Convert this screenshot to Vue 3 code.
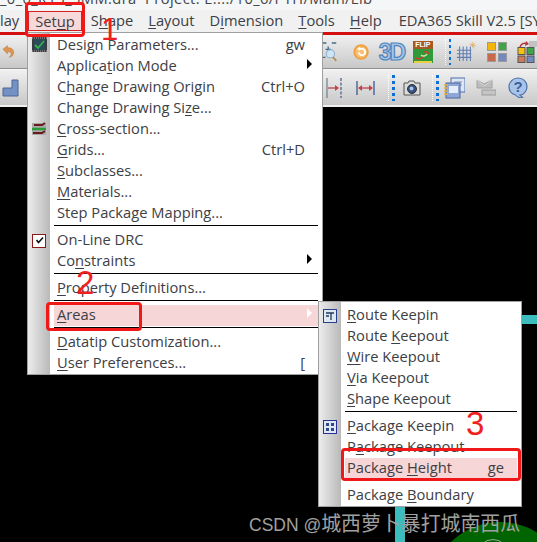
<script setup>
const mainMenu = [
  { pre: 'Desi', u: 'g', post: 'n Parameters...', key: 'gw', icon: 'design' },
  { pre: 'Applica', u: 't', post: 'ion Mode', arrow: true },
  { pre: 'C', u: 'h', post: 'ange Drawing Origin', key: 'Ctrl+O' },
  { pre: 'Change Drawing Si', u: 'z', post: 'e...' },
  { pre: '', u: 'C', post: 'ross-section...', icon: 'cross' },
  { pre: '', u: 'G', post: 'rids...', key: 'Ctrl+D' },
  { pre: '', u: 'S', post: 'ubclasses...' },
  { pre: '', u: 'M', post: 'aterials...' },
  { pre: 'Step Package Mapping...', u: '', post: '' },
  { sep: true },
  { pre: 'On-Line DRC', u: '', post: '', icon: 'check' },
  { pre: 'Co', u: 'n', post: 'straints', arrow: true },
  { sep: true },
  { pre: '', u: 'P', post: 'roperty Definitions...' },
  { sep: true },
  { pre: '', u: 'A', post: 'reas', arrow: true, active: true },
  { sep: true },
  { pre: '', u: 'D', post: 'atatip Customization...' },
  { pre: '', u: 'U', post: 'ser Preferences...', key: '[' }
]

const areasMenu = [
  { pre: '', u: 'R', post: 'oute Keepin', icon: 'route' },
  { pre: 'Route ', u: 'K', post: 'eepout' },
  { pre: '', u: 'W', post: 'ire Keepout' },
  { pre: '', u: 'V', post: 'ia Keepout' },
  { pre: '', u: 'S', post: 'hape Keepout' },
  { sep: true },
  { pre: '', u: 'P', post: 'ackage Keepin', icon: 'package' },
  { pre: 'P', u: 'a', post: 'ckage Keepout' },
  { pre: 'Package ', u: 'H', post: 'eight', key: 'ge', active: true },
  { sep: true },
  { pre: 'Package ', u: 'B', post: 'oundary' }
]

const menus = [
  { name: 'main', items: mainMenu },
  { name: 'areas', items: areasMenu }
]
</script>

<template>
  <div class="screen">
    <div class="titlebar"><span class="title-text">_0_0_R15_5MM.dra&nbsp; Project: E:.../10_6/PTH/Main/Lib</span></div>

    <div class="menubar">
      <span class="top">lay</span>
      <span class="top setup">Set<u>u</u>p</span>
      <span class="top">S<u>h</u>ape</span>
      <span class="top"><u>L</u>ayout</span>
      <span class="top">D<u>i</u>mension</span>
      <span class="top"><u>T</u>ools</span>
      <span class="top"><u>H</u>elp</span>
      <span class="top eda">EDA365 Skill V2.5 [SY</span>
    </div>
    <div class="redline"></div>

    <div class="toolbar row1">
      <svg class="t-undo" width="15" height="15" viewBox="0 0 15 15">
        <path d="M1 5 6 1v2.500c4-.5 7 1.500 7 5 0 3-2 5-5 5.500 2-1.500 2.500-3 2-4.500-.5-1.500-2.500-2-4-1.500V10z" fill="#df9550" stroke="#b97a3a" stroke-width=".6" />
      </svg>
      <svg class="t-zoom" width="18" height="22" viewBox="0 0 18 22">
        <path d="M1 6V1h5M12 1h5M1 12v5h4" fill="none" stroke="#3f6f8e" stroke-width="1.500" />
        <path d="M5 8h6M8 5v6" stroke="#3f6f8e" stroke-width="1.500" />
        <path d="m12 15 5 6" stroke="#b98a52" stroke-width="2" />
        <circle cx="10.500" cy="13" r="4.500" fill="#cfe4f4" stroke="#7fa6c6" />
      </svg>
      <svg class="t-ring" width="18" height="18" viewBox="0 0 18 18">
        <circle cx="9" cy="9" r="8.500" fill="#f0a040" />
        <circle cx="9" cy="9" r="6.500" fill="#f8c070" />
        <path d="M6 5.500h4a3.500 3.500 0 1 1-3.500 4" fill="none" stroke="#fff" stroke-width="2" />
        <path d="m7.500 2.800-3 2.700 3 2.500z" fill="#fff" />
      </svg>
      <span class="t-3d">3D</span>
      <div class="t-flip">
        <span class="flip-head">FLIP</span>
        <svg class="flip-body" width="20" height="14" viewBox="0 0 20 14">
          <rect width="20" height="14" fill="#2f9a3c" />
          <rect x="1" y="12" width="18" height="2" fill="#e8d040" />
          <path d="M3 9c2 1 5 1 7-1M10 3c3-1 5 0 6 2" fill="none" stroke="#d43b2b" stroke-width="1.500" />
          <path d="M8 6c2 2 5 1 6-1" fill="none" stroke="#d8e8a0" stroke-width="1.500" />
        </svg>
      </div>
      <div class="grip first-grip"></div>
      <svg class="t-grid" width="22" height="22" viewBox="0 0 22 22">
        <path d="M1 9h16M1 13h16M1 17h16M4 5v16M8 5v16M12 5v16M16 5v16" stroke="#5f7fb2" stroke-width="1.200" fill="none" />
        <path d="M18 4h4M18 4l3-3M18 4V0M18 4l-3-2M18 4l2 3" stroke="#e2a65c" stroke-width="1" />
      </svg>
      <div class="t-colors">
        <i style="background:#f2b50c"></i><i style="background:#3fa34a"></i>
        <i style="background:#c9694b"></i><i style="background:#7389c2"></i>
      </div>
      <svg class="t-swap" width="20" height="22" viewBox="0 0 20 22">
        <rect x="12" y="0" width="8" height="6" fill="#c2c2c2" />
        <path d="M3 6c1-3 4-5 7-3" fill="none" stroke="#b5363a" stroke-width="1.500" />
        <path d="m9 0 3 3-4 2z" fill="#b5363a" />
        <rect x="1" y="6.500" width="7" height="7" fill="#f7c20e" stroke="#555" />
        <rect x="10" y="6.500" width="7" height="7" fill="#3fa34a" stroke="#555" />
        <rect x="1" y="15" width="7" height="6.500" fill="#cf7a58" stroke="#555" />
        <rect x="10" y="15" width="7" height="6.500" fill="#7389c2" stroke="#555" />
      </svg>
    </div>

    <div class="toolbar row2">
      <svg class="t-shape" width="17" height="18" viewBox="0 0 17 18">
        <path d="M10 1h6v16H1V9h9z" fill="#7391c4" stroke="#4c6796" stroke-width="1" />
      </svg>
      <svg class="t-measure" width="16" height="20" viewBox="0 0 16 20">
        <path d="M1 0v20" stroke="#6a7f95" stroke-width="1.200" />
        <path d="M15 0v20" stroke="#3c5a8c" stroke-width="1.200" stroke-dasharray="3 1.500" />
        <path d="M2 10h10" stroke="#c0454a" stroke-width="1.300" />
        <path d="m9 7 4 3-4 3z" fill="#c0454a" />
      </svg>
      <svg class="t-span" width="19" height="14" viewBox="0 0 19 14">
        <path d="M1 0v14M18 0v14" stroke="#3c5a8c" stroke-width="1.300" />
        <path d="M3 7h13" stroke="#c0454a" stroke-width="1.300" />
        <path d="m6 4-4 3 4 3zM13 4l4 3-4 3z" fill="#c0454a" />
      </svg>
      <div class="grip second-grip"></div>
      <svg class="t-camera" width="18" height="16" viewBox="0 0 18 16">
        <path d="M1 3h4l1-2h5l1 2h5v12H1z" fill="#dcdcdc" stroke="#555" />
        <circle cx="9" cy="9" r="4.500" fill="#34507e" stroke="#333" />
        <circle cx="8.500" cy="8.500" r="2" fill="#a9c4e8" />
      </svg>
      <div class="grip third-grip"></div>
      <svg class="t-notes" width="21" height="22" viewBox="0 0 21 22">
        <rect x="7" y="1" width="14" height="14" fill="#dce6f4" stroke="#5370a8" />
        <path d="M10 5h8M10 8h8" stroke="#7d93bf" />
        <rect x="2" y="6" width="14" height="15" fill="#8fa7d6" stroke="#4a64a0" />
        <rect x="5" y="9" width="9" height="7" fill="#e6ecf8" />
        <path d="M0 8h4M0 11h4M0 14h4M0 17h4" stroke="#e2b13c" stroke-width="1.500" />
      </svg>
      <svg class="t-mail" width="20" height="17" viewBox="0 0 20 17">
        <path d="M1 1 8 5l8-4v8H1z" fill="#bcbcbc" stroke="#a2a2a2" />
        <path d="m1 1 7.500 6L16 1" fill="none" stroke="#d8d8d8" />
        <rect x="6" y="11" width="14" height="5" fill="#c4c4c4" stroke="#9c9c9c" />
      </svg>
      <svg class="t-help" width="20" height="21" viewBox="0 0 20 21">
        <path d="M10 1c5 0 9 3.500 9 8.500S15 18 12 18l3 3c-3 0-6-1-7.500-3C4 17 1 14 1 9.500S5 1 10 1z" fill="#a8c4ea" stroke="#4f71a8" stroke-width="1.200" />
        <text x="10" y="15" text-anchor="middle" class="help-mark">?</text>
      </svg>
    </div>

    <div class="canvas">
      <div class="teal-h"></div>
      <div class="teal-v"></div>
      <div class="pad">
        <div class="pad-ring"></div>
      </div>
      <div class="watermark"><span class="wm-latin">CSDN @</span><span class="wm-cjk">城西萝卜暴打城南西瓜</span></div>
    </div>

    <div v-for="menu in menus" :key="menu.name" class="menu" :class="menu.name">
      <template v-for="(item, i) in menu.items" :key="i">
        <div v-if="item.sep" class="sep"></div>
        <div v-else class="row">
          <div class="gutter">
            <svg v-if="item.icon === 'design'" class="icon-up" width="15" height="15" viewBox="0 0 15 15">
              <rect width="15" height="15" fill="#3b3b3b" />
              <rect x="2" y="2" width="11" height="11" fill="#2c4a5a" />
              <path d="M3 8l3 3 6-7" fill="none" stroke="#33b24a" stroke-width="1.800" />
              <path d="M0 1h15M0 14h15" stroke="#aaa" stroke-dasharray="1 1" />
            </svg>
            <svg v-else-if="item.icon === 'cross'" class="icon-up" width="16" height="14" viewBox="0 0 16 14">
              <rect x="1" y="1" width="14" height="12" fill="#a9a9a9" />
              <path d="M3 3h8l3-2M2 11h9l3-2" fill="none" stroke="#6a1a1a" stroke-width="2" />
              <path d="M1 7h14" stroke="#2d9a3a" stroke-width="2.500" />
            </svg>
            <span v-else-if="item.icon === 'check'" class="checkbox">
              <svg width="11" height="11" viewBox="0 0 11 11">
                <path d="m2.500 5 2 2.500L9 2.500" fill="none" stroke="#111" stroke-width="1.600" />
              </svg>
            </span>
            <svg v-else-if="item.icon === 'route'" width="14" height="14" viewBox="0 0 14 14">
              <rect x=".5" y=".5" width="13" height="13" fill="#dfe8f2" stroke="#2a3f86" />
              <path d="M3 4h8M8 4v7M3 7h3" stroke="#1e3a5c" stroke-width="1.300" fill="none" />
            </svg>
            <svg v-else-if="item.icon === 'package'" width="14" height="14" viewBox="0 0 14 14">
              <rect x=".5" y=".5" width="13" height="13" fill="#dfe8f2" stroke="#2a2f96" />
              <path d="M3 3h3v3H3zM8 3h3v3H8zM3 8h3v3H3zM8 8h3v3H8z" fill="#2c4a8a" />
            </svg>
          </div>
          <div class="body" :class="{ active: item.active }">
            <span class="label">{{ item.pre }}<u>{{ item.u }}</u>{{ item.post }}</span>
            <span v-if="item.key" class="key">{{ item.key }}</span>
            <span v-if="item.arrow" class="arrow"></span>
          </div>
        </div>
      </template>
    </div>

    <div class="mark box-setup"></div>
    <div class="mark box-areas"></div>
    <div class="mark box-height"></div>
    <span class="digit d1">1</span>
    <span class="digit d2">2</span>
    <span class="digit d3">3</span>
  </div>
</template>

<style scoped>
.screen {
  position: relative;
  width: 537px;
  height: 542px;
  overflow: hidden;
  background: #000;
  font-family: "Open Sans", "Noto Sans", sans-serif;
  font-size: 14.700px;
  color: #3d4045;
  display: flex;
  flex-direction: column;
}

u {
  text-underline-offset: 2px;
}

.titlebar {
  height: 10px;
  background: #f5f6f8;
  color: #444;
  white-space: nowrap;
  overflow: hidden;
}

.title-text {
  display: block;
  margin-top: -12px;
  line-height: 20px;
  letter-spacing: 0.4px;
}

.menubar {
  height: 22px;
  background: #f1f1f1;
  display: flex;
  align-items: center;
  gap: 15px;
  white-space: nowrap;
  overflow: hidden;
  flex-shrink: 0;
}

.top {
  padding-bottom: 2px;
}

.setup {
  margin: 0 -6px;
  padding: 0 6px;
  height: 20px;
  line-height: 19px;
  box-sizing: border-box;
  background: #f8d9d9;
  border: 1px solid #d92020;
}

.eda {
  margin-left: 2px;
}

.redline {
  height: 3px;
  background: #d30f0f;
  flex-shrink: 0;
}

.toolbar {
  display: flex;
  align-items: center;
  flex-shrink: 0;
  background: linear-gradient(#f0f0f0, #c8c8c8);
}

.row1 {
  height: 33px;
  border-bottom: 1px solid #8f8f8f;
}

.row2 {
  height: 35px;
  border-top: 1px solid #f6f6f6;
  border-bottom: 2px solid #efefef;
}

.t-undo {
  margin-left: 2px;
}

.t-zoom {
  margin-left: 306px;
}

.t-ring {
  margin-left: 15px;
}

.t-3d {
  margin-left: 10px;
  width: 24px;
  font-family: "Liberation Sans", sans-serif;
  font-weight: 700;
  font-size: 23px;
  line-height: 24px;
  letter-spacing: -2px;
  color: #a8c6e6;
  -webkit-text-stroke: 1.200px #4f85bd;
}

.t-flip {
  margin-left: 10px;
  width: 20px;
  display: flex;
  flex-direction: column;
}

.flip-head {
  background: #a65a22;
  color: #fff;
  font-family: "Liberation Sans", sans-serif;
  font-size: 7px;
  font-weight: 700;
  line-height: 8px;
  text-align: center;
}

.flip-body {
  display: block;
}

.grip {
  width: 6px;
  height: 26px;
  border-left: 1px dotted #fff;
  background: repeating-linear-gradient(#0a6fd6 0 3px, transparent 3px 6px) 3px 0 / 3px 100% no-repeat;
}

.first-grip {
  margin-left: 12px;
}

.second-grip {
  margin-left: 13px;
}

.third-grip {
  margin-left: 11px;
}

.t-grid {
  margin-left: 5px;
}

.t-colors {
  margin-left: 11px;
  width: 20px;
  height: 20px;
  display: grid;
  grid-template-columns: 9px 9px;
  gap: 2px;
  flex-shrink: 0;
}

.t-colors i {
  display: block;
  border: 1px solid #9a9a9a;
}

.t-swap {
  margin-left: 10px;
  flex-shrink: 0;
}

.t-shape {
  margin-left: 2px;
}

.t-measure {
  margin-left: 307px;
}

.t-span {
  margin-left: 14px;
}

.t-camera {
  margin-left: 8px;
}

.t-notes {
  margin-left: 5px;
}

.t-mail {
  margin-left: 11px;
}

.t-help {
  margin-left: 12px;
}

.help-mark {
  font-family: "Liberation Sans", sans-serif;
  font-size: 15px;
  font-weight: 700;
  fill: #3d5f96;
}

.canvas {
  flex: 1;
  position: relative;
  background: #000;
}

.teal-h {
  position: absolute;
  left: 522px;
  top: 208px;
  width: 15px;
  height: 9px;
  background: #3cbcbc;
}

.teal-v {
  position: absolute;
  left: 395px;
  top: 400px;
  width: 10px;
  height: 40px;
  background: #3cbcbc;
}

.pad {
  position: absolute;
  left: 430px;
  top: 415px;
  width: 140px;
  height: 140px;
  border-radius: 50%;
  background: #006400;
}

.pad-ring {
  position: absolute;
  left: 47px;
  top: 17px;
  width: 30px;
  height: 30px;
  border: 1px solid #9aa89a;
  border-radius: 50%;
}

.watermark {
  position: absolute;
  left: 249px;
  top: 404px;
  color: #a0a0a0;
  white-space: nowrap;
  line-height: 24px;
}

.wm-latin {
  font-family: "Liberation Sans", sans-serif;
  font-size: 17.500px;
}

.wm-cjk {
  font-family: "Noto Sans CJK SC", sans-serif;
  font-size: 19.900px;
}

.menu {
  position: absolute;
  box-sizing: border-box;
  background: linear-gradient(90deg, #ececec, #b9b9b9) 0 0 / 22px 100% no-repeat, #fff;
  background-origin: padding-box;
  border: 1px solid #a0a0a0;
}

.main {
  left: 27px;
  top: 32px;
  width: 296px;
  height: 343px;
  padding: 2px 0 0;
}

.areas {
  left: 318px;
  top: 301px;
  width: 204px;
  height: 206px;
  padding: 3px 0 0;
}

.row {
  display: flex;
  height: 21px;
}

.gutter {
  flex: 0 0 26px;
  padding-right: 4px;
  box-sizing: border-box;
  display: flex;
  align-items: center;
  justify-content: center;
}

.icon-up {
  margin-top: -2px;
}

.body {
  position: relative;
  flex: 1;
  margin-right: 4px;
  padding: 0 13px 4px 3px;
  display: flex;
  align-items: center;
  justify-content: space-between;
  white-space: nowrap;
}

.areas .body {
  padding-left: 2px;
}

.active {
  background: #f6d6d6;
}

.arrow {
  position: absolute;
  right: 6px;
  top: 3px;
  border-left: 5px solid #000;
  border-top: 5px solid transparent;
  border-bottom: 5px solid transparent;
}

.active .arrow {
  border-left-color: #fff;
}

.sep {
  height: 1px;
  margin: 1px 4px 4px 26px;
  background: #000;
}

.checkbox {
  width: 14px;
  height: 14px;
  box-sizing: border-box;
  background: #fff;
  border: 1px solid #8a1a1a;
  display: flex;
  align-items: center;
  justify-content: center;
}

.mark {
  position: absolute;
  box-sizing: border-box;
  border: 3px solid #f01818;
  border-radius: 4px;
}

.box-setup {
  left: 25px;
  top: 2px;
  width: 60px;
  height: 35px;
}

.box-areas {
  left: 46px;
  top: 302px;
  width: 96px;
  height: 29px;
}

.box-height {
  left: 341px;
  top: 448px;
  width: 180px;
  height: 33px;
}

.digit {
  position: absolute;
  font-family: "Liberation Sans", sans-serif;
  color: #f02020;
  line-height: 1;
}

.d1 {
  left: 101px;
  top: 14px;
  font-size: 31px;
}

.d2 {
  left: 76px;
  top: 266px;
  font-size: 33px;
}

.d3 {
  left: 466px;
  top: 407px;
  font-size: 33px;
}
</style>

<style>
body {
  overflow: hidden;
  background: #000;
}
</style>
